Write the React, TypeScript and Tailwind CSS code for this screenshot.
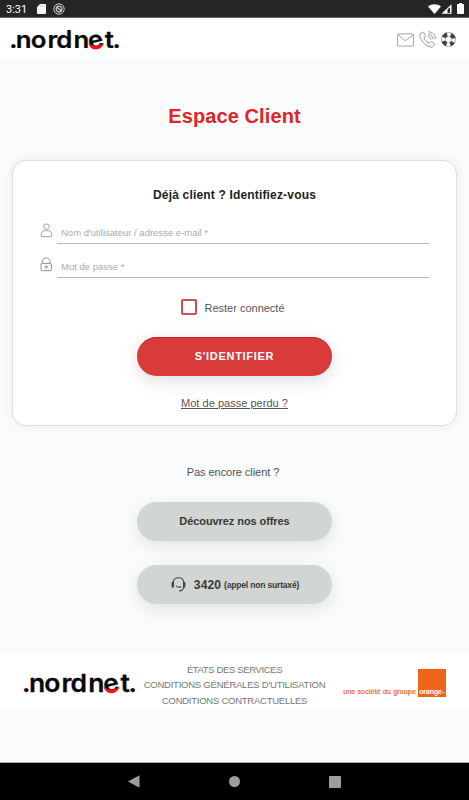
import type { ReactNode } from "react";

const footerLinks = [
  { label: "ÉTATS DES SERVICES", className: "tracking-[-0.37px]" },
  { label: "CONDITIONS GÉNÉRALES D'UTILISATION", className: "tracking-[-0.23px]" },
  { label: "CONDITIONS CONTRACTUELLES", className: "tracking-[-0.25px]" },
];

function Logo({ className }: { className: string }) {
  return (
    <svg viewBox="0 0 108 21" className={className} role="img" aria-label="nordnet">
      <text
        x="-1.7 4.500 18.400 33.900 42.200 58.200 73.600 87.300 94.500"
        y="18 18 18 18 18 18 19.6 18 18"
        rotate="0 0 0 0 0 0 -14 0 0"
        fontSize="24"
        fontWeight="600"
        fill="#080808"
        stroke="#080808"
        strokeWidth=".25"
        transform="scale(1.075 1)"
        className="font-['Inter',sans-serif]"
      >
        .nordnet.
      </text>
      <path d="M77.400 12.800c3 4 10 4 15.700.3-1.500 4-4.400 6.400-8.100 6.400-4 0-7-2.600-7.600-6.700Z" fill="#f51414" />
    </svg>
  );
}

function StatusBar() {
  return (
    <div className="flex h-[18px] items-center border-b border-[#666] bg-[#252525] pl-[6px] pr-[5px] text-white">
      <span className="w-[31px] pt-px font-['Roboto',sans-serif] text-[11px] leading-none">3:31</span>
      <svg viewBox="0 0 9 10" className="h-[10px] w-[9px]" fill="#f5f5f5">
        <path d="M3 0h5.2c.5 0 .8.3.8.8v8.4c0 .5-.3.8-.8.8H.8C.3 10 0 9.700 0 9.200V3Z" />
        <path d="M3.300 1.200v1.600M5.200 1.200v1.600M7.100 1.200v1.600" stroke="#aaa" strokeWidth=".6" />
      </svg>
      <svg viewBox="0 0 12 12" className="ml-[7px] size-3" fill="none" stroke="#d0d0d0">
        <circle cx="6" cy="6" r="5.200" />
        <circle cx="6" cy="6" r="2.900" strokeWidth="1.200" />
        <path d="M3.500 4l5 4" strokeWidth="1.400" />
      </svg>
      <svg viewBox="0 0 13 10" className="ml-auto h-[10px] w-[13px]" fill="#fff">
        <path d="M0 2.500C3.600-.6 9.400-.6 13 2.500L6.500 10Z" />
      </svg>
      <svg viewBox="0 0 11 10" className="mr-px h-[10px] w-[11px]">
        <path d="M.5 9.800 10.500.2v9.600Z" fill="#fff" />
        <path d="M6.500 5.600v3.300L9 8.900V3.200Z" fill="#252525" />
      </svg>
      <svg viewBox="0 0 7 11" className="ml-[4px] h-[11px] w-[7px]" fill="#fff">
        <path d="M2 0h3v1h1.200c.5 0 .8.300.8.800v8.400c0 .500-.300.800-.800.800H.8c-.5 0-.8-.3-.8-.8V1.800C0 1.300.3 1 .8 1H2Z" />
      </svg>
    </div>
  );
}

function Header() {
  return (
    <header className="flex h-10 items-start bg-white pl-[11px] pr-[13px]">
      <Logo className="mt-[12px] h-[21px] w-[108px] overflow-visible" />
      <div className="ml-auto mt-[13px] flex items-center">
        <svg viewBox="0 0 17 14" className="h-[14px] w-[17px]" fill="none" stroke="#9a9a9a" strokeWidth=".9">
          <rect x=".6" y=".9" width="15.800" height="12.200" rx=".6" />
          <path d="m1.200 1.900 6.300 5.100c.7.500 1.300.5 2 0l6.300-5.100" />
        </svg>
        <svg viewBox="0 0 17 17" className="ml-[5px] size-[17px]" fill="none" stroke="#858585" strokeWidth=".85" strokeLinejoin="round" strokeLinecap="round">
          <path d="M1.400 2.800 3.200 1.300c.4-.3.8-.3 1.200.1l2 2.700c.3.5.2.900-.1 1.200L4.900 6.400c.5 2.400 2.900 4.900 5.500 5.800l1.200-1.400c.3-.4.8-.4 1.200-.1l2.500 1.900c.5.400.5.900.1 1.300l-1.500 1.700c-.5.500-1.200.7-2 .5C6.400 15 1.800 10 .7 4.600c-.1-.8.100-1.300.7-1.800Z" />
          <path d="M9 5.200c1.600.3 2.700 1.400 2.900 3M9.400 3.100c2.600.3 4.300 2 4.600 4.700M9.500.8c4 .2 6.700 2.900 6.900 6.800" />
        </svg>
        <svg viewBox="0 0 15 15" className="ml-[5px] size-[15px]" fill="none">
          <circle cx="7.500" cy="7.500" r="6.900" stroke="#777" strokeWidth=".7" />
          <circle cx="7.500" cy="7.500" r="3.300" stroke="#888" strokeWidth=".6" />
          <circle
            cx="7.500"
            cy="7.500"
            r="5.200"
            stroke="#3f3f46"
            strokeWidth="4"
            strokeDasharray="4.600 3.568"
            strokeDashoffset="2.300"
            transform="rotate(45 7.500 7.500)"
          />
        </svg>
      </div>
    </header>
  );
}

function Field({ icon, placeholder, type }: { icon: ReactNode; placeholder: string; type: string }) {
  return (
    <label className="flex h-[34px] items-end">
      <span className="mb-[6px] w-[17px]">{icon}</span>
      <input
        type={type}
        placeholder={placeholder}
        className="h-6 min-w-0 flex-1 border-b border-[#b9b9b9] bg-transparent pl-1 pt-[2px] text-[9.5px] outline-none placeholder:text-[#ababab]"
      />
    </label>
  );
}

function LoginCard() {
  return (
    <section className="mx-[12px] mt-[30px] flex h-[266px] flex-col items-center rounded-[14px] border border-[#dedede] bg-white px-[27px] shadow-[0_0_12px_rgba(0,0,0,0.07)]">
      <h2 className="mt-[26px] text-[12px] font-bold leading-4 tracking-[0.17px] text-[#222]">Déjà client ? Identifiez-vous</h2>
      <div className="mt-[7px] w-full">
        <Field
          type="text"
          placeholder="Nom d'utilisateur / adresse e-mail *"
          icon={
            <svg viewBox="0 0 13 15" className="h-[15px] w-[13px]" fill="none" stroke="#909090" strokeWidth=".85">
              <circle cx="6.400" cy="3.600" r="2.700" />
              <path d="M1.200 12.900c-.5-3.500 1.100-5.100 3.300-5.200h3.800c2.300.1 3.900 1.700 3.400 5.200 0 .5-.3.700-.8.700H2c-.5 0-.8-.2-.8-.7Z" />
            </svg>
          }
        />
        <Field
          type="password"
          placeholder="Mot de passe *"
          icon={
            <svg viewBox="0 0 13 15" className="h-[15px] w-[13px]" fill="none" stroke="#858585" strokeWidth=".9">
              <rect x="1" y="6.400" width="10.400" height="7.300" rx="1.400" />
              <path d="M2.200 6.400V5C2.200 2.500 4 1 6.200 1s3.900 1.500 3.900 4v1.400" />
              <circle cx="6.200" cy="10" r="1.200" />
            </svg>
          }
        />
      </div>
      <label className="mt-[21px] flex h-4 items-center pr-[3px] text-[11px] text-[#555]">
        <input type="checkbox" className="mr-[7px] size-4 appearance-none rounded-[2px] border-2 border-[#d94a4d] bg-white" />
        <span className="pt-[3px]">Rester connecté</span>
      </label>
      <button className="mt-[22px] h-[39px] w-[195px] shrink-0 rounded-full border-t border-[#cc181e] bg-[#d93a3a] pb-px text-[11px] font-bold tracking-[0.7px] text-white shadow-[0_5px_18px_rgba(0,0,0,0.13)]">
        S'IDENTIFIER
      </button>
      <a className="mt-[19px] text-[11px] leading-4 tracking-[0.03px] text-[#555] underline underline-offset-1">Mot de passe perdu ?</a>
    </section>
  );
}

function Footer() {
  return (
    <footer className="flex h-[55px] items-start bg-white pl-6 pr-[23px]">
      <Logo className="mr-[2px] mt-[20px] h-[22px] w-[111px] shrink-0 overflow-visible" />
      <div className="ml-[6px] mt-[9px] flex w-[183px] shrink-0 flex-col items-center text-[9.5px] leading-[15.300px] text-[#777]">
        {footerLinks.map((link) => (
          <a key={link.label} className={`whitespace-nowrap ${link.className}`}>{link.label}</a>
        ))}
      </div>
      <div className="ml-auto mt-[16px] flex items-end">
        <span className="mr-[2px] whitespace-nowrap text-[7px] leading-[10px] tracking-[0.17px] text-[#ec651b] [-webkit-text-stroke:0.2px_#ec651b]">une société du groupe</span>
        <span className="flex h-7 w-7 items-end justify-center bg-[#ec651b] pb-px text-[7px] font-bold leading-[8px] tracking-[-0.1px] text-white">
          orange<sup className="text-[3px] leading-none">™</sup>
        </span>
      </div>
    </footer>
  );
}

export default function App() {
  return (
    <div className="flex h-[800px] w-[469px] flex-col overflow-hidden bg-[#fafbfd] font-['Liberation_Sans',Arial,sans-serif]">
      <StatusBar />
      <Header />
      <main className="flex h-[595px] flex-col">
        <h1 className="mt-[44px] text-center text-[20px] font-bold leading-7 tracking-[0.1px] text-[#dc2727]">Espace Client</h1>
        <LoginCard />
        <div className="flex flex-col items-center">
          <p className="mt-[38px] pr-[3px] text-[11px] leading-4 tracking-[-0.05px] text-[#505050]">Pas encore client ?</p>
          <button className="mt-[22px] h-[39px] w-[195px] rounded-full bg-[#d2d6d2] text-[11px] font-bold tracking-[-0.08px] text-[#383838] shadow-[0_5px_18px_rgba(0,0,0,0.1)]">
            Découvrez nos offres
          </button>
          <button className="mt-[24px] flex h-[39px] w-[195px] items-center justify-center rounded-full bg-[#d2d6d2] pl-px text-[#383838] shadow-[0_5px_18px_rgba(0,0,0,0.1)]">
            <svg viewBox="0 0 15 15" className="mr-[8px] size-[15px]" fill="none" stroke="#444" strokeWidth="1.100" strokeLinecap="round">
              <path d="M2.200 5.800C2.400 2.400 4.600.8 7.500.8s5.100 1.600 5.300 5M12.800 9.800c-.4 2.400-1.900 3.900-4.300 4.100M5.400 9.200c1.200 1 3 1.200 4.500.5" />
              <path d="M1.800 6v3.500M13.200 6v3.500" strokeWidth="2.400" />
            </svg>
            <span className="text-[12px] font-bold tracking-[0.1px]">3420</span>
            <span className="ml-[3px] pt-[2px] text-[8.500px] font-bold tracking-[-0.17px]">(appel non surtaxé)</span>
          </button>
        </div>
      </main>
      <Footer />
      <nav className="mt-auto flex h-[38px] items-center justify-center gap-[89px] border-t border-[#aaa] bg-black">
        <svg viewBox="0 0 12 13" className="h-[13px] w-3" fill="#9e9e9e">
          <path d="M0 6.500 11.500.2v12.600Z" />
        </svg>
        <span className="size-[11px] rounded-full bg-[#9e9e9e]" />
        <span className="size-3 rounded-[1px] bg-[#9e9e9e]" />
      </nav>
    </div>
  );
}
